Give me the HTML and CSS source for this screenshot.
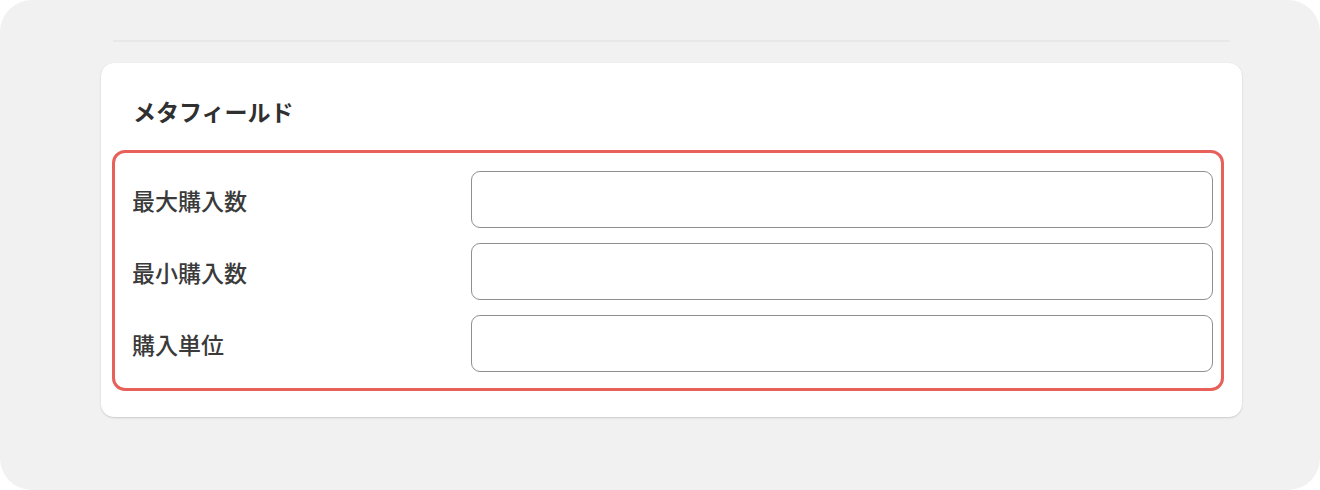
FILE: index.html
```html
<!DOCTYPE html>
<html lang="ja">
<head>
    <meta charset="UTF-8">
    <meta name="viewport" content="width=device-width, initial-scale=1.0">
    <title>メタフィールド</title>
    <link rel="stylesheet" href="styles.css">
</head>
<body>

    <div class="frame">
        <div class="divider"></div>

        <div class="card">
            <h2 class="card-title">メタフィールド</h2>

            <div class="field-group">
                <div class="field-row">
                    <label for="max-qty">最大購入数</label>
                    <input type="text" id="max-qty" class="field-input">
                </div>
                <div class="field-row">
                    <label for="min-qty">最小購入数</label>
                    <input type="text" id="min-qty" class="field-input">
                </div>
                <div class="field-row">
                    <label for="unit-qty">購入単位</label>
                    <input type="text" id="unit-qty" class="field-input">
                </div>
            </div>
        </div>
    </div>

</body>
</html>
```

FILE: styles.css
```css
body {
    margin: 0;
    background-color: #fff;
    font-family: "Noto Sans CJK JP", "Noto Sans", sans-serif;
    color: #303030;
}

.frame {
    height: 490px;
    background-color: #f1f1f1;
    border-radius: 32px;
    padding: 40px 78px 0 101px;
    box-sizing: border-box;
}

.divider {
    height: 2px;
    background-color: #e8e8e8;
    margin: 0 12px 21px 12px;
}

.card {
    background-color: #fff;
    border-radius: 13px;
    box-shadow: 0 1px 2px rgba(0, 0, 0, 0.15), 0 0 1px rgba(0, 0, 0, 0.08);
    padding: 33px 18px 26px 11px;
}

.card-title {
    margin: 0 0 24px 21px;
    font-size: 23px;
    line-height: 30px;
    font-weight: 700;
}

.field-group {
    border: 3px solid #e8605a;
    border-radius: 13px;
    padding: 18px 8px 16px 17px;
    display: flex;
    flex-direction: column;
    gap: 15px;
}

.field-row {
    display: grid;
    grid-template-columns: 339px 1fr;
    align-items: center;
}

.field-row label {
    font-size: 23px;
    font-weight: 500;
    color: #3a3a3a;
}

.field-input {
    height: 57px;
    box-sizing: border-box;
    border: 1.5px solid #8f8f8f;
    border-radius: 9px;
    background-color: #fff;
    font: inherit;
    padding: 0 14px;
}
```
